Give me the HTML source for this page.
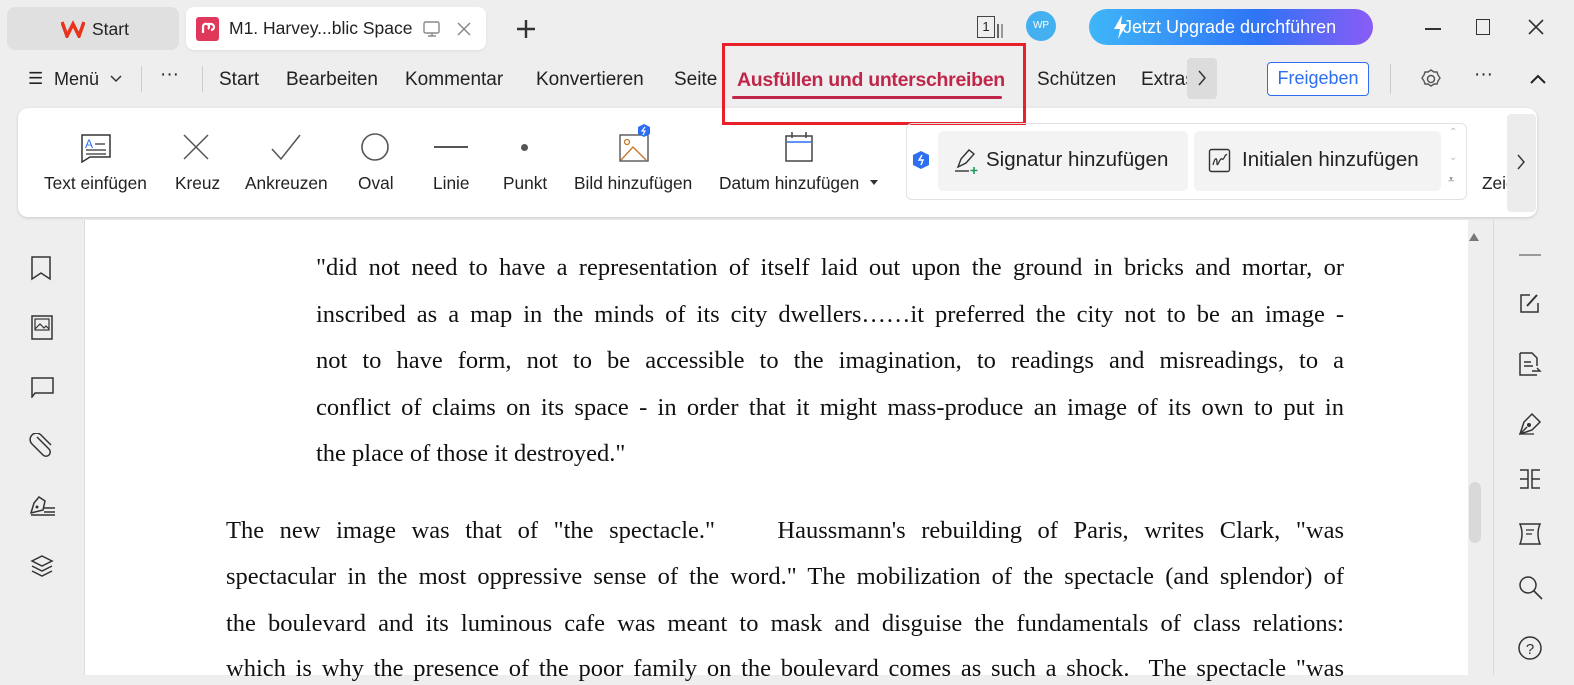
<!DOCTYPE html>
<html><head><meta charset="utf-8"><style>
*{margin:0;padding:0;box-sizing:border-box}
body{width:1574px;height:675px;overflow:hidden;background:#eeeeee;font-family:"Liberation Sans",sans-serif;color:#222;position:relative}
.abs{position:absolute}
.tab{position:absolute;top:7px;height:43px;border-radius:8px;font-size:17.5px;display:flex;align-items:center}
.menu{position:absolute;top:69px;font-size:19px;color:#222;white-space:nowrap}
.tool{position:absolute;top:173px;font-size:17.3px;color:#222;white-space:nowrap}
.doc{position:absolute;font-family:"Liberation Serif",serif;font-size:24.5px;color:#111;text-align:justify;text-align-last:justify;white-space:nowrap;height:30px}
</style></head><body>
<!-- tabs -->
<div class="tab" style="left:7px;width:172px;background:#e0e0e0">
<svg class="abs" style="left:54px;top:13px" width="24" height="18" viewBox="0 0 24 18"><path d="M1 2 L6 16 L12 4 L18 16 L23 2" fill="none" stroke="#e8341c" stroke-width="3.5"/></svg><span class="abs" style="left:85px;top:12px;font-size:17.5px">Start</span></div>
<div class="tab" style="left:186px;width:300px;background:#fff;box-shadow:0 1px 2px rgba(0,0,0,.08)">
<div class="abs" style="left:10px;top:10px;width:23px;height:24px;background:#e0385a;border-radius:3px"></div>
<svg class="abs" style="left:13px;top:13px" width="17" height="17"><path d="M4 13 L4 7 A3 3 0 1 1 9 9 M9 4 L12 4 A3 3 0 0 1 12 10" fill="none" stroke="#fff" stroke-width="2.2"/></svg>
<span style="margin-left:43px">M1. Harvey...blic Space</span>
<svg class="abs" style="left:236px;top:14px" width="20" height="17"><rect x="2" y="1" width="15" height="11" rx="1.5" fill="none" stroke="#888" stroke-width="1.4"/><path d="M6 15h8M10 12v3" stroke="#888" stroke-width="1.4"/></svg>
<svg class="abs" style="left:270px;top:14px" width="16" height="16"><path d="M2 2L14 14M14 2L2 14" stroke="#888" stroke-width="1.5"/></svg>
</div>
<svg class="abs" style="left:515px;top:18px" width="22" height="22"><path d="M11 2v18M2 11h18" stroke="#333" stroke-width="2.4"/></svg>
<!-- top right -->
<div class="abs" style="left:977px;top:16px;width:18px;height:22px;border:1.5px solid #444;font-size:13px;text-align:center;line-height:19px">1</div>
<div class="abs" style="left:997px;top:24px;width:2px;height:14px;background:#666"></div><div class="abs" style="left:1001px;top:24px;width:2px;height:14px;background:#999"></div>
<div class="abs" style="left:1026px;top:11px;width:30px;height:30px;border-radius:50%;background:#45b0f0;color:#fff;font-size:10px;text-align:center;line-height:30px">WP</div>
<div class="abs" style="left:1089px;top:9px;width:284px;height:36px;border-radius:18px;background:linear-gradient(90deg,#3fb6f8,#2e74f5 60%,#8a5cf6);color:#fff;font-size:18px;line-height:36px;padding-left:34px;white-space:nowrap">Jetzt Upgrade durchführen</div>
<svg class="abs" style="left:1112px;top:15px" width="16" height="24"><path d="M10 0L2 14h6l-2 10 9-15H9z" fill="#fff"/></svg>
<div class="abs" style="left:1425px;top:28px;width:16px;height:1.6px;background:#333"></div>
<div class="abs" style="left:1476px;top:19px;width:14px;height:16px;border:1.6px solid #333"></div>
<svg class="abs" style="left:1528px;top:19px" width="16" height="16"><path d="M1 1L15 15M15 1L1 15" stroke="#333" stroke-width="1.6"/></svg>
<!-- menu row -->
<div class="menu" style="left:28px;font-size:17px">☰</div>
<div class="menu" style="left:54px;font-size:18px">Menü</div>
<svg class="abs" style="left:110px;top:75px" width="12" height="8"><path d="M1 1l5 5 5-5" fill="none" stroke="#333" stroke-width="1.5"/></svg>
<div class="abs" style="left:141px;top:66px;width:1px;height:26px;background:#ccc"></div>
<div class="menu" style="left:160px;top:64px">···</div>
<div class="abs" style="left:202px;top:66px;width:1px;height:26px;background:#ccc"></div>
<div class="menu" style="left:219px">Start</div>
<div class="menu" style="left:286px">Bearbeiten</div>
<div class="menu" style="left:405px">Kommentar</div>
<div class="menu" style="left:536px">Konvertieren</div>
<div class="menu" style="left:674px">Seite</div>
<div class="abs" style="left:719px;top:60px;width:300px;height:50px;background:#eeeeee"></div>
<div class="menu" style="left:737px;color:#c0264a;font-weight:bold;font-size:19.5px;letter-spacing:-0.3px">Ausfüllen und unterschreiben</div>
<div class="abs" style="left:732px;top:96px;width:270px;height:3px;background:#c0264a;border-radius:2px"></div>
<div class="menu" style="left:1037px">Schützen</div>
<div class="menu" style="left:1141px;width:46px;overflow:hidden">Extras</div>
<div class="abs" style="left:1187px;top:58px;width:30px;height:41px;background:#dcdcdc;border-radius:4px"></div>
<svg class="abs" style="left:1197px;top:69px" width="10" height="18"><path d="M2 2l6 7-6 7" fill="none" stroke="#333" stroke-width="1.5"/></svg>
<div class="abs" style="left:1267px;top:62px;width:102px;height:34px;border:1.3px solid #2d6ff0;border-radius:4px;color:#2d6ff0;font-size:18px;text-align:center;line-height:31px;background:#fff">Freigeben</div>
<div class="abs" style="left:1390px;top:64px;width:1px;height:30px;background:#ccc"></div>
<svg class="abs" style="left:1420px;top:68px" width="22" height="22"><circle cx="11" cy="11" r="3.5" fill="none" stroke="#555" stroke-width="1.5"/><path d="M11 2l3 2 3 0 1 3 2 3-2 3-1 3-3 0-3 2-3-2-3 0-1-3-2-3 2-3 1-3 3 0z" fill="none" stroke="#555" stroke-width="1.4"/></svg>
<div class="menu" style="left:1474px;top:64px">···</div>
<svg class="abs" style="left:1529px;top:73px" width="18" height="12"><path d="M2 10l7-7 7 7" fill="none" stroke="#222" stroke-width="2"/></svg>
<!-- red box -->
<div class="abs" style="left:722px;top:43px;width:304px;height:82px;border:3px solid #e8202a"></div>
<!-- toolbar panel -->
<div class="abs" style="left:18px;top:108px;width:1519px;height:109px;background:#fff;border-radius:10px;box-shadow:0 1px 3px rgba(0,0,0,.15)"></div>
<div class="abs" style="left:722px;top:108px;width:304px;height:17px;border:3px solid #e8202a;border-top:none;"></div>
<svg class="abs" style="left:80px;top:133px" width="32" height="30"><path d="M2 2h28v22H10l-8 5z" fill="none" stroke="#333" stroke-width="1.5"/><text x="5" y="15" font-size="12" fill="#2d6ff0" font-family="Liberation Sans">A</text><path d="M15 11h10M6 17h20M6 21h20" stroke="#333" stroke-width="1.3"/></svg>
<svg class="abs" style="left:182px;top:133px" width="28" height="28"><path d="M2 2l24 24M26 2L2 26" stroke="#555" stroke-width="1.5"/></svg>
<svg class="abs" style="left:270px;top:133px" width="32" height="28"><path d="M2 16l9 10L30 2" fill="none" stroke="#555" stroke-width="1.5"/></svg>
<svg class="abs" style="left:360px;top:132px" width="30" height="30"><ellipse cx="15" cy="15" rx="13" ry="13" fill="none" stroke="#555" stroke-width="1.6"/></svg>
<div class="abs" style="left:434px;top:146px;width:34px;height:1.8px;background:#555"></div>
<div class="abs" style="left:521px;top:144px;width:7px;height:7px;border-radius:50%;background:#555"></div>
<svg class="abs" style="left:618px;top:123px" width="36" height="40"><rect x="2" y="12" width="28" height="26" fill="none" stroke="#555" stroke-width="1.4"/><circle cx="9" cy="19" r="2.5" fill="none" stroke="#c77a2a" stroke-width="1.3"/><path d="M3 37l12-13 13 13" fill="none" stroke="#c77a2a" stroke-width="1.4"/><path d="M26 1l6 3v7l-6 3-6-3V4z" fill="#2d6ff0"/><path d="M27 4l-3 4h3l-2 4" stroke="#fff" stroke-width="1.2" fill="none"/></svg>
<svg class="abs" style="left:784px;top:131px" width="30" height="32"><rect x="2" y="5" width="26" height="25" fill="none" stroke="#444" stroke-width="1.5"/><path d="M3 11h24" stroke="#2d6ff0" stroke-width="1.6"/><path d="M8 1v6M22 1v6" stroke="#444" stroke-width="1.5"/></svg>
<div class="tool" style="left:44px">Text einfügen</div>
<div class="tool" style="left:175px">Kreuz</div>
<div class="tool" style="left:245px">Ankreuzen</div>
<div class="tool" style="left:358px">Oval</div>
<div class="tool" style="left:433px">Linie</div>
<div class="tool" style="left:503px">Punkt</div>
<div class="tool" style="left:574px">Bild hinzufügen</div>
<div class="tool" style="left:719px">Datum hinzufügen</div>
<svg class="abs" style="left:870px;top:180px" width="8" height="6"><path d="M0 0h8L4 5z" fill="#333"/></svg>
<div class="abs" style="left:906px;top:123px;width:561px;height:77px;border:1px solid #e2e2e2;border-radius:6px"></div>
<svg class="abs" style="left:912px;top:150px" width="18" height="20"><path d="M9 1l8 4v10l-8 4-8-4V5z" fill="#2d6ff0"/><path d="M10 5l-3 5h4l-2 5" stroke="#fff" stroke-width="1.4" fill="none"/></svg>
<div class="abs" style="left:938px;top:131px;width:250px;height:60px;background:#f3f3f3;border-radius:5px"></div>
<div class="abs" style="left:1194px;top:131px;width:247px;height:60px;background:#f3f3f3;border-radius:5px"></div>
<svg class="abs" style="left:953px;top:147px" width="26" height="28"><path d="M5 20l3-8 8-9 5 4-8 9z" fill="none" stroke="#333" stroke-width="1.4"/><path d="M2 24h14" stroke="#333" stroke-width="1.4"/><path d="M21 20v7M17.5 23.5h7" stroke="#1c9a5a" stroke-width="1.6"/></svg>
<svg class="abs" style="left:1208px;top:148px" width="24" height="26"><rect x="1.5" y="1.5" width="20" height="22" rx="2" fill="none" stroke="#333" stroke-width="1.4"/><path d="M5 17c2-8 4-8 4-2s3-6 5-4 3-6 5-4" fill="none" stroke="#333" stroke-width="1.3"/></svg>
<div class="abs" style="left:986px;top:148px;font-size:20.5px;color:#222;white-space:nowrap">Signatur hinzufügen</div>
<div class="abs" style="left:1242px;top:148px;font-size:20.5px;color:#222;white-space:nowrap">Initialen hinzufügen</div>
<div class="abs" style="left:1449px;top:127px;font-size:10px;color:#bbb">⌃</div>
<div class="abs" style="left:1449px;top:152px;font-size:10px;color:#bbb">⌄</div>
<div class="abs" style="left:1448px;top:174px;font-size:11px;color:#555">⩡</div>
<div class="tool" style="left:1482px;width:25px;overflow:hidden">Zeichnen</div>
<div class="abs" style="left:1507px;top:114px;width:29px;height:98px;background:#ececec;border-radius:4px"></div>
<svg class="abs" style="left:1516px;top:153px" width="10" height="18"><path d="M2 2l6 7-6 7" fill="none" stroke="#333" stroke-width="1.4"/></svg>
<!-- page -->
<div class="abs" style="left:85px;top:220px;width:1383px;height:455px;background:#fff"></div>
<div class="abs" style="left:84px;top:220px;width:1px;height:455px;background:#ddd"></div>
<div class="abs" style="left:1493px;top:220px;width:1px;height:455px;background:#d8d8d8"></div>
<svg class="abs" style="left:1469px;top:233px" width="10" height="8"><path d="M0 8L5 0l5 8z" fill="#777"/></svg>
<div class="abs" style="left:1469px;top:482px;width:12px;height:61px;background:#d9d9d9;border-radius:6px"></div>
<!-- left icons -->
<svg class="abs" style="left:30px;top:255px" width="22" height="26"><path d="M2 2h18v22l-9-6-9 6z" fill="none" stroke="#333" stroke-width="1.5"/></svg>
<svg class="abs" style="left:31px;top:315px" width="22" height="26"><rect x="1" y="1" width="20" height="23" fill="none" stroke="#333" stroke-width="1.5"/><rect x="4" y="4" width="14" height="11" fill="none" stroke="#333" stroke-width="1.2"/><path d="M4 14l5-5 4 4 2-2 3 3" fill="none" stroke="#333" stroke-width="1.2"/></svg>
<svg class="abs" style="left:30px;top:376px" width="25" height="22"><path d="M2 2h21v15H5l-3 4z" fill="none" stroke="#333" stroke-width="1.5"/></svg>
<svg class="abs" style="left:29px;top:433px" width="26" height="26"><path d="M8 4l12 12a4 4 0 0 1-6 6L3 11a6 6 0 0 1 9-9l10 10" fill="none" stroke="#333" stroke-width="1.5"/></svg>
<svg class="abs" style="left:29px;top:494px" width="28" height="24"><path d="M2 19l3-10 5-6 6 4-2 9z" fill="none" stroke="#333" stroke-width="1.5"/><circle cx="8" cy="13" r="1.5" fill="#333"/><path d="M15 14h11M15 18h11M2 21h24" stroke="#333" stroke-width="1.4"/></svg>
<svg class="abs" style="left:30px;top:554px" width="24" height="24"><path d="M12 2l10 5-10 5-10-5z M2 12l10 5 10-5 M2 17l10 5 10-5" fill="none" stroke="#333" stroke-width="1.5"/></svg>
<!-- right icons -->
<div class="abs" style="left:1519px;top:254px;width:22px;height:2px;background:#999"></div>
<svg class="abs" style="left:1518px;top:292px" width="22" height="22"><path d="M12 3H3v17h17v-9" fill="none" stroke="#333" stroke-width="1.5"/><path d="M9 14l10-11" stroke="#333" stroke-width="2"/></svg>
<svg class="abs" style="left:1518px;top:351px" width="24" height="26"><path d="M2 2h12l5 5v8M19 24H2V2" fill="none" stroke="#333" stroke-width="1.5"/><path d="M6 11h7M6 15h9M14 20h8l-3-3" fill="none" stroke="#333" stroke-width="1.4"/></svg>
<svg class="abs" style="left:1518px;top:412px" width="24" height="24"><path d="M2 22l4-12 8-8 8 8-8 8zM2 22l7-7" fill="none" stroke="#333" stroke-width="1.5"/><circle cx="11" cy="13" r="2" fill="#333"/><path d="M2 22h14" stroke="#333" stroke-width="1.3"/></svg>
<svg class="abs" style="left:1518px;top:468px" width="24" height="22"><path d="M2 2h8v18H2M2 11h8M22 2h-8v18h8M14 11h8" fill="none" stroke="#333" stroke-width="1.5"/></svg>
<svg class="abs" style="left:1518px;top:522px" width="24" height="24"><path d="M2 2q4 10 0 20h20q-4-10 0-20z" fill="none" stroke="#333" stroke-width="1.5"/><path d="M8 8h8M8 12h6" stroke="#333" stroke-width="1.3"/></svg>
<svg class="abs" style="left:1518px;top:575px" width="26" height="26"><circle cx="10" cy="10" r="8" fill="none" stroke="#333" stroke-width="1.5"/><path d="M16 16l8 8" stroke="#333" stroke-width="1.6"/></svg>
<svg class="abs" style="left:1518px;top:636px" width="26" height="26"><circle cx="12" cy="12" r="11" fill="none" stroke="#333" stroke-width="1.5"/><text x="12" y="18" font-size="15" text-anchor="middle" fill="#333" font-family="Liberation Sans">?</text></svg>
<!-- document text -->
<div class="doc" style="left:316px;width:1028px;top:254px">"did not need to have a representation of itself laid out upon the ground in bricks and mortar, or</div>
<div class="doc" style="left:316px;width:1028px;top:301px">inscribed as a map in the minds of its city dwellers……it preferred the city not to be an image -</div>
<div class="doc" style="left:316px;width:1028px;top:347px">not to have form, not to be accessible to the imagination, to readings and misreadings, to a</div>
<div class="doc" style="left:316px;width:1028px;top:394px">conflict of claims on its space - in order that it might mass-produce an image of its own to put in</div>
<div class="doc" style="left:316px;width:1028px;top:440px;text-align-last:left">the place of those it destroyed."</div>
<div class="doc" style="left:226px;width:1118px;top:517px">The new image was that of "the spectacle."&nbsp;&nbsp;&nbsp; Haussmann's rebuilding of Paris, writes Clark, "was</div>
<div class="doc" style="left:226px;width:1118px;top:563px">spectacular in the most oppressive sense of the word." The mobilization of the spectacle (and splendor) of</div>
<div class="doc" style="left:226px;width:1118px;top:610px">the boulevard and its luminous cafe was meant to mask and disguise the fundamentals of class relations:</div>
<div class="doc" style="left:226px;width:1118px;top:655px">which is why the presence of the poor family on the boulevard comes as such a shock.&nbsp; The spectacle "was</div>
</body></html>
